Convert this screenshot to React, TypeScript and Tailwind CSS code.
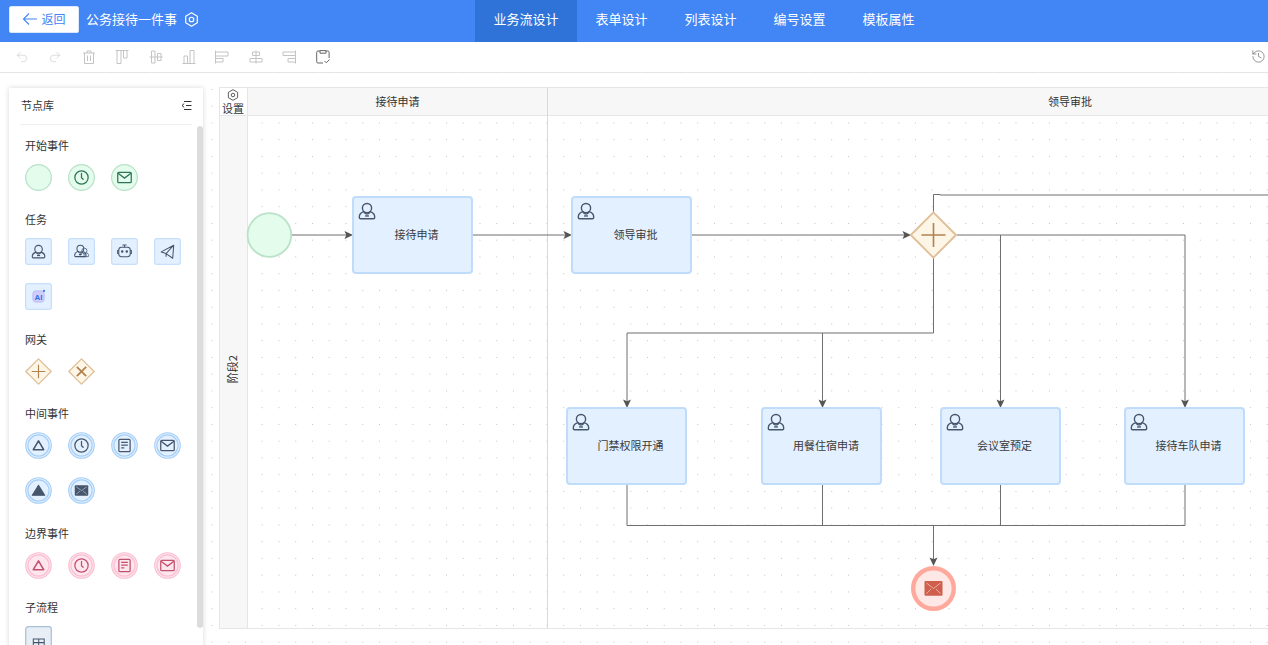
import React from "react";
import { Undo2, Redo2, History } from "lucide-react";

const FONT = "[font-family:'Noto_Sans_CJK_SC','Liberation_Sans',sans-serif]";

const HexIcon = ({ size = 14, color = "#fff", sw = 1.1 }: { size?: number; color?: string; sw?: number }) => (
  <svg width={size} height={size} viewBox="0 0 14 14" fill="none" stroke={color} strokeWidth={sw}>
    <path d="M7 .8 12.4 3.9V10.1L7 13.2 1.6 10.1V3.9Z" strokeLinejoin="round" />
    <circle cx="7" cy="7" r="2.1" />
  </svg>
);

const UserGlyph = ({ c = "#46566c", x = 0, y = 0, s = 1 }: { c?: string; x?: number; y?: number; s?: number }) => (
  <g transform={`translate(${x} ${y}) scale(${s})`} fill="none" stroke={c} strokeWidth={1.25} strokeLinejoin="round">
    <circle cx="8" cy="5.4" r="4.1" />
    <path d="M5.2 8.6C3 9.4 1.2 10.7 1.2 13v.9c0 .6.4 1 1 1h11.6c.6 0 1-.4 1-1V13c0-2.3-1.8-3.6-4-4.4-.7 1.4-1.6 2.2-2.8 2.2s-2.1-.8-2.8-2.2Z" />
    <path d="M6.3 12.4h3.4" />
  </g>
);

const ClockGlyph = ({ c }: { c: string }) => (
  <g fill="none" stroke={c} strokeWidth="1.2">
    <circle cx="13" cy="13" r="6.4" />
    <path d="M13 9v4.2l1.6 1.5" strokeLinecap="round" />
  </g>
);
const MailGlyph = ({ c }: { c: string }) => (
  <g fill="none" stroke={c} strokeWidth="1.2">
    <rect x="6.5" y="8" width="13" height="10" rx="1" />
    <path d="M6.8 9l6.2 4.6L19.2 9" />
  </g>
);
const TriGlyph = ({ c }: { c: string }) => (
  <path d="M13 8.6 18 17H8Z" fill="none" stroke={c} strokeWidth="1.5" strokeLinejoin="round" />
);
const DocGlyph = ({ c }: { c: string }) => (
  <g fill="none" stroke={c} strokeWidth="1.2">
    <rect x="7.6" y="7" width="10.8" height="12" rx="1" />
    <path d="M9.8 10h6.4M9.8 12.6h6.4M9.8 15.4h3" />
  </g>
);

const Round = ({ fill, stroke, children }: { fill: string; stroke: string; children?: React.ReactNode }) => (
  <svg width="27" height="27" viewBox="0 0 26 26">
    <circle cx="13" cy="13" r="12.3" fill={fill} stroke={stroke} strokeWidth="1.1" />
    <circle cx="13" cy="13" r="10.2" fill="none" stroke={stroke} strokeWidth="1.1" />
    {children}
  </svg>
);
const Start = ({ children }: { children?: React.ReactNode }) => (
  <svg width="27" height="27" viewBox="0 0 26 26">
    <circle cx="13" cy="13" r="12.4" fill="#e3fcec" stroke="#b9e2c8" strokeWidth="1.2" />
    {children}
  </svg>
);
const Task = ({ children }: { children?: React.ReactNode }) => (
  <svg width="27" height="27" viewBox="0 0 26 26">
    <rect x=".6" y=".6" width="24.8" height="24.8" rx="2.2" fill="#e3f0ff" stroke="#c6e0fc" strokeWidth="1.2" />
    {children}
  </svg>
);
const Gate = ({ children }: { children?: React.ReactNode }) => (
  <svg width="27" height="27" viewBox="0 0 26 26">
    <path d="M13 .8 25.2 13 13 25.2.8 13Z" fill="#fdf5e6" stroke="#dfbe98" strokeWidth="1.2" strokeLinejoin="round" />
    {children}
  </svg>
);

const BLUE = { fill: "#e3f0ff", stroke: "#a6cff7" };
const PINK = { fill: "#fde6ee", stroke: "#fbbfd2" };
const SLATE = "#46566c";
const ROSE = "#c4506f";

const sections: { title: string; items: React.ReactNode[] }[] = [
  {
    title: "开始事件",
    items: [
      <Start />,
      <Start><ClockGlyph c="#2f7459" /></Start>,
      <Start><MailGlyph c="#2f7459" /></Start>,
    ],
  },
  {
    title: "任务",
    items: [
      <Task><UserGlyph x={6} y={6} s={0.88} /></Task>,
      <Task>
        <UserGlyph x={5.5} y={6} s={0.8} />
        <UserGlyph x={11} y={9} s={0.6} />
      </Task>,
      <Task>
        <g fill="none" stroke={SLATE} strokeWidth="1">
          <rect x="7.5" y="9" width="11" height="9" rx="2.5" />
          <path d="M13 9V6.8M11 6.8h4M7.5 12H6.4v3h1.1M18.5 12h1.1v3h-1.1" />
          <circle cx="10.8" cy="13" r=".7" fill={SLATE} />
          <circle cx="15.2" cy="13" r=".7" fill={SLATE} />
        </g>
      </Task>,
      <Task>
        <path d="M19 7 7 13.4l4.6 1.6L18 19.5ZM19 7l-7.4 8v3" fill="none" stroke={SLATE} strokeWidth="1" strokeLinejoin="round" />
      </Task>,
      <Task>
        <rect x="7.5" y="7.5" width="11" height="11" rx="3" fill="#cfcdfb" stroke="#b3b0f7" strokeWidth=".6" />
        <text x="13" y="16" textAnchor="middle" fontSize="7.5" fontWeight="700" fill="#2f6fe8" fontFamily="Liberation Sans">AI</text>
        <circle cx="18.3" cy="7.6" r="1" fill="#2f6fe8" />
      </Task>,
    ],
  },
  {
    title: "网关",
    items: [
      <Gate><path d="M6.5 13h13M13 6.5v13" stroke="#b08350" strokeWidth="1.1" /></Gate>,
      <Gate><path d="M8.5 8.5l9 9M17.5 8.5l-9 9" stroke="#b08350" strokeWidth="1.7" /></Gate>,
    ],
  },
  {
    title: "中间事件",
    items: [
      <Round {...BLUE}><TriGlyph c={SLATE} /></Round>,
      <Round {...BLUE}><ClockGlyph c={SLATE} /></Round>,
      <Round {...BLUE}><DocGlyph c={SLATE} /></Round>,
      <Round {...BLUE}><MailGlyph c={SLATE} /></Round>,
      <Round {...BLUE}><path d="M13 8 19 17.6H7Z" fill={SLATE} stroke={SLATE} strokeLinejoin="round" /></Round>,
      <Round {...BLUE}>
        <rect x="6.5" y="8" width="13" height="10" rx="1" fill={SLATE} />
        <path d="M8 9.5l5 3.6 5-3.6M8 16.5l3.5-3M18 16.5l-3.5-3" fill="none" stroke="#b6c3d2" strokeWidth=".7" />
      </Round>,
    ],
  },
  {
    title: "边界事件",
    items: [
      <Round {...PINK}><TriGlyph c={ROSE} /></Round>,
      <Round {...PINK}><ClockGlyph c={ROSE} /></Round>,
      <Round {...PINK}><DocGlyph c={ROSE} /></Round>,
      <Round {...PINK}><MailGlyph c={ROSE} /></Round>,
    ],
  },
  {
    title: "子流程",
    items: [
      <svg width="27" height="27" viewBox="0 0 26 26">
        <rect x=".7" y=".7" width="24.6" height="24.6" rx="2.4" fill="#e8eef5" stroke="#a9c0d8" strokeWidth="1.2" />
        <path d="M8 12.5h10.5v8H8ZM8 16h10.5M13.2 12.5v8" fill="none" stroke={SLATE} strokeWidth="1" />
      </svg>,
    ],
  },
];

const tabs = ["业务流设计", "表单设计", "列表设计", "编号设置", "模板属性"];

const alignPaths = [
  "M.5 .5h13M2 .5h4v13H2ZM8.5 .5h3.5v7.5H8.5Z",
  "M.5 7h13M2.5 1h3.5v12H2.5ZM8.5 3.5h3.5v7H8.5Z",
  "M.5 13.5h13M2 6h3.5v7.5H2ZM8 .5h4v13H8Z",
  "M.5 .5v13M.5 2H13v4H.5ZM.5 8.5H8V12H.5Z",
  "M7 .5v13M3.5 2h7v3.5h-7ZM1 8.5h12V12H1Z",
  "M13.5 .5v13M1 2h12.5v3.5H1ZM6 8.5h7.5V12H6Z",
];

const AlignIcon = ({ d }: { d: string }) => (
  <svg width="14" height="14" viewBox="0 0 14 14" fill="none" stroke="#c4c4c4" strokeWidth="1">
    <path d={d} />
  </svg>
);

const Node = ({ label, pos }: { label: string; pos: string }) => (
  <div className={`absolute ${pos} flex h-[78px] w-[121px] items-center justify-center rounded-[4px] border-2 border-[#bfdcfb] bg-[#e3f0ff] pl-[9px] text-[11px] text-[#3a3a3a]`}>
    <svg width="18" height="18" viewBox="0 0 16 16" className="absolute left-[4px] top-[4px]">
      <UserGlyph />
    </svg>
    <span className="pb-[1px]">{label}</span>
  </div>
);

const Arrow = ({ x, y, dir }: { x: number; y: number; dir: "r" | "d" }) =>
  dir === "r" ? (
    <path d={`M${x} ${y}l-8.5-4 1.8 4-1.8 4Z`} fill="#555" />
  ) : (
    <path d={`M${x} ${y}l-4-8.5 4 1.8 4-1.8Z`} fill="#555" />
  );

export default function App() {
  return (
    <div className={`flex h-[645px] w-[1268px] flex-col overflow-hidden bg-white ${FONT}`}>
      <header className="relative flex h-[42px] shrink-0 items-center bg-[#4285f4] pb-[3px] pl-[9px] text-white">
        <button className="flex h-[27px] w-[70px] items-center justify-center gap-[3px] rounded-[2px] border border-[#dbe7fb] bg-white pb-[1px] text-[12px] text-[#4285f4]">
          <svg width="16" height="14" viewBox="0 0 16 14" fill="none" stroke="#4285f4" strokeWidth="1.1">
            <path d="M15 7H1.5M7 1.5 1.5 7 7 12.5" />
          </svg>
          返回
        </button>
        <span className="ml-[7px] pb-[1px] text-[13px]">公务接待一件事</span>
        <span className="ml-[7px] pb-[1px]"><HexIcon size={15} /></span>
        <nav className="absolute left-[475px] top-0 flex h-full">
          {tabs.map((t, i) => (
            <div key={t} className={`flex items-center px-[18.5px] pb-[5px] text-[13px] ${i === 0 ? "bg-[#2f73d8]" : ""}`}>
              {t}
            </div>
          ))}
        </nav>
      </header>

      <div className="flex h-[30px] shrink-0 items-center justify-between bg-white pb-[1px] pl-[15px] pr-[2px]">
        <div className="flex items-center gap-[19.4px]">
          <Undo2 size={14} strokeWidth={1} color="#c4c4c4" />
          <Redo2 size={14} strokeWidth={1} color="#c4c4c4" />
          <svg width="14" height="14" viewBox="0 0 14 14" fill="none" stroke="#c4c4c4" strokeWidth="1">
            <path d="M1 3h12M5 3V1h4v2M2.5 3v10.5h9V3M5.5 5.5v5.5M8.5 5.5v5.5" />
          </svg>
          {alignPaths.map((d) => (
            <AlignIcon key={d} d={d} />
          ))}
          <svg width="14" height="14" viewBox="0 0 14 14" fill="none" stroke="#666" strokeWidth="1">
            <path d="M4 1H2C1.2 1 .7 1.5.7 2.300v9.400c0 .8.5 1.300 1.300 1.300h5M10 1h1.800c.8 0 1.300.5 1.300 1.300V8M4 .6h6v2.600H4ZM8.500 11l1.800 1.800L13.500 9.500" />
          </svg>
        </div>
        <History size={15} strokeWidth={1.1} color="#666" />
      </div>

      <main className="flex min-h-0 flex-1 gap-[16px] overflow-hidden border-t border-[#e6e6e6] bg-white bg-[radial-gradient(circle,#c2c2c2_0.7px,transparent_0.9px)] bg-[size:16.75px_16.75px] bg-[position:2.6px_-8.7px] pl-[9px] pt-[14px]">
        <aside className="relative mt-[1px] h-[600px] w-[194px] shrink-0 overflow-hidden bg-white shadow-[0_0_5px_rgba(0,0,0,0.16)]">
          <div className="mx-[11px] flex h-[37px] items-center justify-between border-b border-[#eeeeee] pb-[1px] text-[11px] text-[#333]">
            <span className="ml-[1px]">节点库</span>
            <svg width="11" height="11" viewBox="0 0 11 11" fill="none" stroke="#333" strokeWidth="1">
              <path d="M3 1.500h7.500M5 5.500h5.500M3 9.500h7.500M3.200 3.600 1 5.500l2.200 1.900" />
            </svg>
          </div>
          <div className="absolute right-0 top-[38px] h-[502px] w-[6px] rounded-[3px] bg-[#dcdcdc]" />
          <div className="pl-[16px] pt-[12px]">
            {sections.map((s) => (
              <section key={s.title} className="mb-[21.4px]">
                <h3 className="mb-[11px] h-[16px] text-[11px] font-normal leading-[16px] text-[#333]">{s.title}</h3>
                <div className="grid grid-cols-[repeat(4,26px)] gap-x-[17px] gap-y-[19px]">
                  {s.items.map((it, i) => (
                    <div key={i} className="h-[26px] w-[26px]">{it}</div>
                  ))}
                </div>
              </section>
            ))}
          </div>
        </aside>

        <div className="relative flex h-[542px] w-[1600px] shrink-0 border border-[#e6e6e6] text-[11px] text-[#333]">
          <div className="flex w-[28px] shrink-0 flex-col border-r border-[#e6e6e6] bg-[#f7f7f7]">
            <div className="flex h-[28px] shrink-0 flex-col items-center border-b border-[#e6e6e6] bg-white pr-[1px] pt-[1px] leading-[14px]">
              <HexIcon size={12} color="#444" sw={1} />
              <span className="whitespace-nowrap text-[11px]">设置</span>
            </div>
            <div className="flex flex-1 items-center justify-center pb-[6px] pr-[2px]">
              <span className="-rotate-90 whitespace-nowrap">阶段2</span>
            </div>
          </div>
          <div className="flex h-full w-[300px] shrink-0 flex-col border-r border-[#d9d9d9]">
            <div className="flex h-[28px] shrink-0 items-center justify-center border-b border-[#e6e6e6] bg-[#f7f7f7]">接待申请</div>
          </div>
          <div className="flex h-full w-[1044px] shrink-0 flex-col">
            <div className="flex h-[28px] shrink-0 items-center justify-center border-b border-[#e6e6e6] bg-[#f7f7f7]">领导审批</div>
          </div>

          <svg className="absolute left-0 top-0" width="1049" height="541" viewBox="220 88 1049 541" fill="none">
            <g stroke="#6f6f6f" strokeWidth="1">
              <path d="M292 235H347M472 235H565M691 235H905" />
              <path d="M957 235H1185V402M1000.500 235V402" />
              <path d="M933.500 258V333H627V402M822.500 333V402" />
              <path d="M933.500 212V194.500H940V195H1268" />
              <path d="M627 485V525.500H1185V485M822.500 485V525.500M1000.500 485V525.500M933.500 525.500V560" />
            </g>
            <Arrow x={353} y={235} dir="r" />
            <Arrow x={572} y={235} dir="r" />
            <Arrow x={911} y={235} dir="r" />
            <Arrow x={627} y={408} dir="d" />
            <Arrow x={822.5} y={408} dir="d" />
            <Arrow x={1000.5} y={408} dir="d" />
            <Arrow x={1185} y={408} dir="d" />
            <Arrow x={933.5} y={566} dir="d" />

            <circle cx="269.4" cy="235" r="21.8" fill="#e3fcec" stroke="#b9e2c8" strokeWidth="1.8" />

            <path d="M933.400 212.300 956 235 933.400 257.700 910.800 235Z" fill="#fdf5e6" stroke="#dfbe98" strokeWidth="1.8" strokeLinejoin="round" />
            <path d="M921.500 235H945.500M933.500 223V247" stroke="#b08350" strokeWidth="1.6" />

            <circle cx="933.5" cy="588.5" r="20.3" fill="#fde8e5" stroke="#ffa99d" strokeWidth="4.4" />
            <rect x="924.5" y="581" width="18" height="14.7" rx="1" fill="#cd5f4c" />
            <path d="M926.500 583 933.500 588.500 940.500 583M926.500 593.700 931 589M940.500 593.700 936 589" stroke="#f2b5a8" strokeWidth=".9" />
          </svg>

          <Node label="接待申请" pos="left-[131.5px] top-[107.5px]" />
          <Node label="领导审批" pos="left-[350.5px] top-[107.5px]" />
          <Node label="门禁权限开通" pos="left-[345.5px] top-[318.5px]" />
          <Node label="用餐住宿申请" pos="left-[541px] top-[318.5px]" />
          <Node label="会议室预定" pos="left-[719.5px] top-[318.5px]" />
          <Node label="接待车队申请" pos="left-[903.5px] top-[318.5px]" />
        </div>
      </main>
    </div>
  );
}
